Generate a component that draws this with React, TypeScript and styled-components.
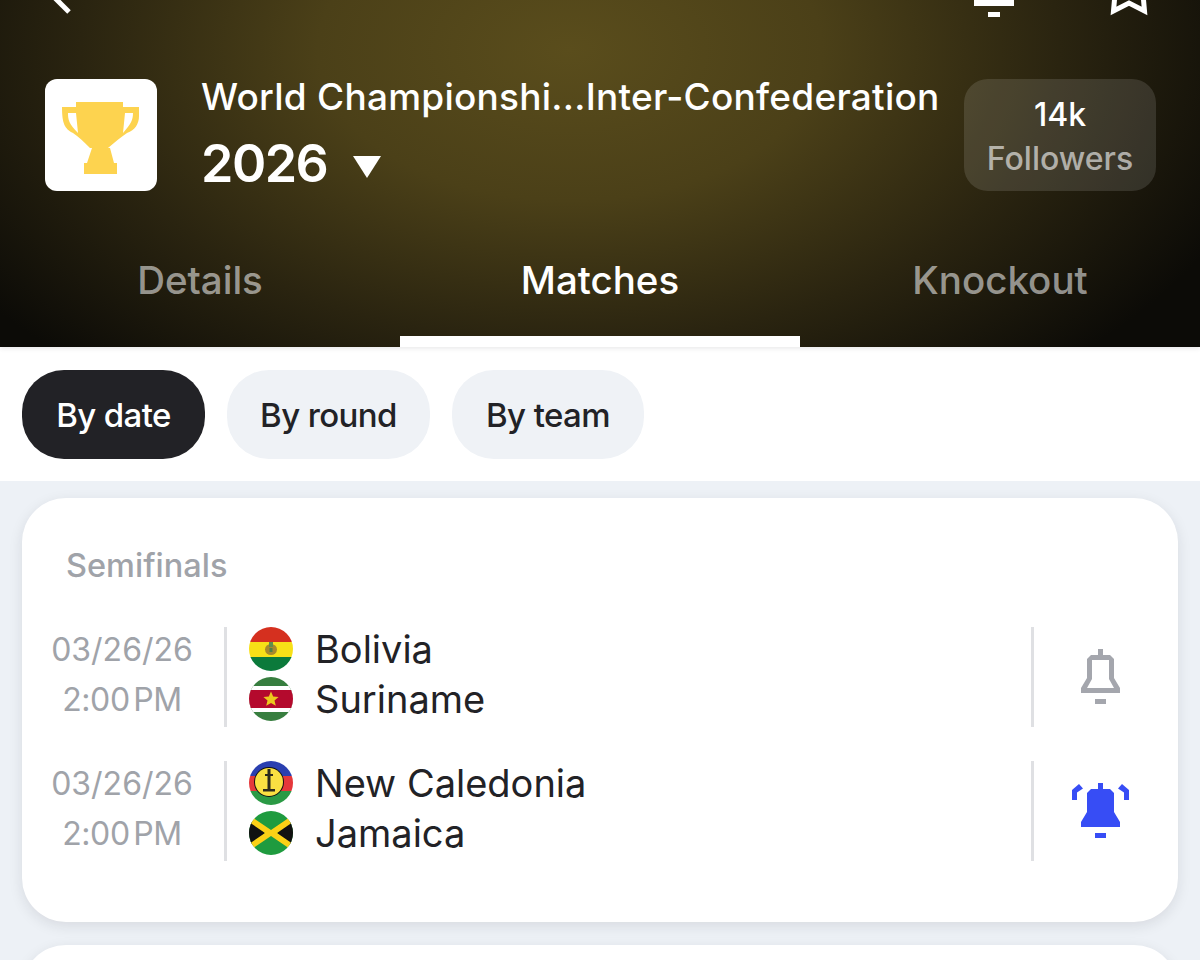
import styled, { createGlobalStyle } from 'styled-components';

const GlobalStyle = createGlobalStyle`
  html, body {
    margin: 0;
    padding: 0;
    background: #edf1f6;
  }
  body {
    font-family: Inter, "Liberation Sans", sans-serif;
    overflow: hidden;
  }
`;

const matches = [
  { id: 1, date: '03/26/26', time: '2:00 PM', home: 'Bolivia', away: 'Suriname', homeFlag: 'bo', awayFlag: 'sr', on: false },
  { id: 2, date: '03/26/26', time: '2:00 PM', home: 'New Caledonia', away: 'Jamaica', homeFlag: 'nc', awayFlag: 'jm', on: true },
];

const Flag = ({ code }: { code: string }) => {
  if (code === 'bo') {
    return (
      <FlagSvg viewBox="0 0 44 44">
        <rect width="44" height="15" fill="#d5301f" />
        <rect y="15" width="44" height="15" fill="#f7e017" />
        <rect y="30" width="44" height="14" fill="#0b7a3b" />
        <ellipse cx="22" cy="22.5" rx="6" ry="5.500" fill="#a8892c" />
        <rect x="20" y="15" width="4" height="5" fill="#5f8d4e" />
        <rect x="20.500" y="21" width="3" height="4" fill="#4f7f46" />
      </FlagSvg>
    );
  }
  if (code === 'sr') {
    return (
      <FlagSvg viewBox="0 0 44 44">
        <rect width="44" height="44" fill="#377e3f" />
        <rect y="9" width="44" height="26" fill="#fff" />
        <rect y="13" width="44" height="18" fill="#b40a2d" />
        <polygon points="22,14.500 24.200,19.600 29.600,20 25.500,23.500 26.800,28.800 22,26 17.200,28.800 18.500,23.500 14.400,20 19.800,19.600" fill="#ecc81d" />
      </FlagSvg>
    );
  }
  if (code === 'nc') {
    return (
      <FlagSvg viewBox="0 0 44 44">
        <rect width="44" height="15" fill="#2a3fb0" />
        <rect y="15" width="44" height="15" fill="#e5383b" />
        <rect y="30" width="44" height="14" fill="#2b9a45" />
        <circle cx="20" cy="21" r="15" fill="#111" />
        <circle cx="20" cy="21" r="14" fill="#fae042" />
        <rect x="18.500" y="8" width="3" height="20" fill="#2c2a1c" />
        <rect x="16" y="13" width="8" height="2" fill="#2c2a1c" />
        <rect x="14" y="28" width="12" height="2.500" fill="#2c2a1c" />
      </FlagSvg>
    );
  }
  return (
    <FlagSvg viewBox="0 0 44 44">
      <rect width="44" height="44" fill="#1f9b3f" />
      <polygon points="0,8 16,22 0,36" fill="#111" />
      <polygon points="44,8 28,22 44,36" fill="#111" />
      <path d="M0 4 L22 19 L44 4 V11 L28 22 L44 33 V40 L22 25 L0 40 V33 L16 22 L0 11 Z" fill="#fcd116" />
    </FlagSvg>
  );
};

const BellOff = () => (
  <BellSvg viewBox="0 0 60 60">
    <path
      d="M28 4h5v6h7l4 4v19l6 10v5H11v-5l6-10V14l4-4h7Z M22 15v19l-5 9h27l-5-9V15Z"
      fill="#a4a6ad"
      fillRule="evenodd"
    />
    <rect x="25" y="54" width="11" height="5" fill="#a4a6ad" />
  </BellSvg>
);

const BellOn = () => (
  <BellSvg viewBox="0 0 60 60">
    <path d="M28 4h5v6h7l4 4v19l6 10v5H11v-5l6-10V14l4-4h7Z" fill="#374df5" />
    <rect x="25" y="54" width="11" height="5" fill="#374df5" />
    <path d="M2 21V11l7-6 4 4.500-6 4v7.500Z" fill="#374df5" />
    <path d="M59 21V11l-7-6-4 4.500 6 4v7.500Z" fill="#374df5" />
  </BellSvg>
);

const App = () => {
  return (
    <Page>
      <GlobalStyle />
      <Header>
        <TopBar>
          <svg width="40" height="18" viewBox="0 0 40 18">
            <path d="M2 -7 L21 12" fill="none" stroke="#fff" strokeWidth="5" />
          </svg>
          <TopActions>
            <svg width="40" height="18" viewBox="0 0 40 18">
              <path d="M0 0H40V6H0Z" fill="#fff" />
              <rect x="14" y="12" width="12" height="5" fill="#fff" />
            </svg>
            <svg width="38" height="18" viewBox="0 0 38 18">
              <path d="M5 -6 L3.500 11 L19 3 L34.500 11 L33 -6" fill="none" stroke="#fff" strokeWidth="5" />
            </svg>
          </TopActions>
        </TopBar>
        <Identity>
          <LogoBox>
            <svg width="80" height="74" viewBox="0 0 80 74">
              <path
                fillRule="evenodd"
                fill="#fdd34f"
                d="M15 0H62V5H78V14C78 22 74 28 66 31C60 35 54 40 47 46H49L53 61H56V72H23V61H26L31 46H29C23 40 18 35 12 31C4 27 1 22 1 5H15Z M7 11C7 18 8 22 17 31L15 11Z M72 11C72 18 70 22 62 31L64 11Z"
              />
            </svg>
          </LogoBox>
          <TitleBlock>
            <LeagueName>World Championshi...Inter-Confederation</LeagueName>
            <SeasonRow>
              <Season>2026</Season>
              <Caret viewBox="0 0 28 22">
                <polygon points="0,0 28,0 14,22" fill="#fff" />
              </Caret>
            </SeasonRow>
          </TitleBlock>
          <FollowersBox>
            <FollowerCount>14k</FollowerCount>
            <FollowerLabel>Followers</FollowerLabel>
          </FollowersBox>
        </Identity>
        <Tabs>
          <Tab>Details</Tab>
          <Tab $active>Matches</Tab>
          <Tab>Knockout</Tab>
        </Tabs>
      </Header>
      <ChipRow>
        <Chip $active $width={183}>By date</Chip>
        <Chip $width={203}>By round</Chip>
        <Chip $width={192}>By team</Chip>
      </ChipRow>
      <Content>
        <Card>
          <RoundTitle>Semifinals</RoundTitle>
          <MatchList>
            {matches.map((m) => (
              <MatchRow key={m.id}>
                <DateCol>
                  <span>{m.date}</span>
                  <TimeText>{m.time}</TimeText>
                </DateCol>
                <Teams>
                  <Team>
                    <Flag code={m.homeFlag} />
                    {m.home}
                  </Team>
                  <Team>
                    <Flag code={m.awayFlag} />
                    {m.away}
                  </Team>
                </Teams>
                <BellCol>{m.on ? <BellOn /> : <BellOff />}</BellCol>
              </MatchRow>
            ))}
          </MatchList>
        </Card>
        <Card />
      </Content>
    </Page>
  );
};

const Page = styled.div`
  width: 1200px;
  height: 960px;
  overflow: hidden;
  background: #edf1f6;
`;

const Header = styled.header`
  position: relative;
  height: 347px;
  box-sizing: border-box;
  display: flex;
  flex-direction: column;
  background: radial-gradient(ellipse 720px 430px at 570px 50px, #5a4d1c 0%, #4b4018 35%, #2a2410 68%, #0c0b07 100%);
  background-color: #0c0b07;
  box-shadow: 0 1px 5px rgba(34, 34, 38, 0.12);
`;

const TopBar = styled.div`
  height: 18px;
  display: flex;
  justify-content: space-between;
  align-items: flex-start;
  padding: 0 52px 0 48px;
`;

const TopActions = styled.div`
  display: flex;
  gap: 96px;
`;

const Identity = styled.div`
  display: flex;
  align-items: center;
  margin: 61px 44px 0 45px;
  height: 112px;
`;

const LogoBox = styled.div`
  width: 112px;
  height: 112px;
  flex-shrink: 0;
  padding-top: 8px;
  box-sizing: border-box;
  display: flex;
  align-items: center;
  justify-content: center;
  background: #fff;
  border-radius: 12px;
`;

const TitleBlock = styled.div`
  flex: 1;
  margin: 0 0 2px 44px;
  display: flex;
  flex-direction: column;
  gap: 15px;
`;

const LeagueName = styled.div`
  color: #fff;
  font-size: 37px;
  font-weight: 500;
  line-height: 44px;
  letter-spacing: 0.25px;
  white-space: nowrap;
`;

const SeasonRow = styled.div`
  display: flex;
  align-items: center;
  gap: 26px;
`;

const Season = styled.div`
  color: #fff;
  font-size: 52px;
  font-weight: 600;
  line-height: 60px;
  letter-spacing: -1.5px;
`;

const Caret = styled.svg`
  width: 28px;
  height: 22px;
  margin-top: 6px;
`;

const FollowersBox = styled.div`
  width: 192px;
  height: 112px;
  flex-shrink: 0;
  box-sizing: border-box;
  padding-top: 4px;
  display: flex;
  flex-direction: column;
  align-items: center;
  justify-content: center;
  gap: 8px;
  background: rgba(255, 255, 255, 0.12);
  border-radius: 24px;
`;

const FollowerCount = styled.div`
  color: #fff;
  font-size: 32px;
  font-weight: 500;
  line-height: 36px;
`;

const FollowerLabel = styled.div`
  color: rgba(255, 255, 255, 0.6);
  font-size: 32px;
  font-weight: 500;
  line-height: 36px;
`;

const Tabs = styled.nav`
  margin-top: auto;
  display: grid;
  grid-template-columns: repeat(3, 1fr);
`;

const Tab = styled.div<{ $active?: boolean }>`
  height: 97px;
  box-sizing: border-box;
  padding-top: 8px;
  display: flex;
  align-items: flex-start;
  justify-content: center;
  font-size: 38.5px;
  line-height: 44px;
  font-weight: 500;
  color: ${(p) => (p.$active ? '#fff' : 'rgba(255, 255, 255, 0.55)')};
  border-bottom: 11px solid ${(p) => (p.$active ? '#fff' : 'transparent')};
`;

const ChipRow = styled.div`
  height: 134px;
  box-sizing: border-box;
  display: flex;
  gap: 22px;
  padding: 23px 22px;
  background: #fff;
`;

const Chip = styled.div<{ $active?: boolean; $width: number }>`
  width: ${(p) => p.$width}px;
  height: 89px;
  display: flex;
  align-items: center;
  justify-content: center;
  border-radius: 42px;
  font-size: 33px;
  font-weight: 500;
  letter-spacing: -0.6px;
  background: ${(p) => (p.$active ? '#222226' : '#eff2f6')};
  color: ${(p) => (p.$active ? '#fff' : '#222226')};
`;

const Content = styled.div`
  display: flex;
  flex-direction: column;
  gap: 23px;
  padding: 17px 22px 0;
`;

const Card = styled.section`
  height: 424px;
  flex-shrink: 0;
  box-sizing: border-box;
  padding: 46px 0 0;
  background: #fff;
  border-radius: 44px;
  box-shadow: 0 4px 14px rgba(34, 34, 38, 0.1);
`;

const RoundTitle = styled.div`
  margin-left: 44px;
  color: #a0a3a9;
  font-size: 32.500px;
  line-height: 44px;
  font-weight: 500;
`;

const MatchList = styled.div`
  margin-top: 39px;
  display: flex;
  flex-direction: column;
  gap: 34px;
`;

const MatchRow = styled.div`
  height: 100px;
  display: grid;
  grid-template-columns: 202px 1fr 144px;
  grid-template-rows: 100px;
`;

const DateCol = styled.div`
  padding: 0 2px 5px 0;
  box-sizing: border-box;
  display: flex;
  flex-direction: column;
  align-items: center;
  justify-content: center;
  gap: 6px;
  color: #a0a3a9;
  font-size: 32px;
  line-height: 44px;
`;

const TimeText = styled.span`
  word-spacing: -5px;
  letter-spacing: -0.4px;
`;

const Teams = styled.div`
  border-left: 3px solid #dfe0e3;
  border-right: 3px solid #dfe0e3;
  padding: 0 0 6px 22px;
  display: flex;
  flex-direction: column;
  justify-content: center;
  gap: 6px;
`;

const Team = styled.div`
  display: flex;
  align-items: center;
  gap: 22px;
  color: #222226;
  font-size: 38px;
  line-height: 44px;
`;

const FlagSvg = styled.svg`
  width: 44px;
  height: 44px;
  flex-shrink: 0;
  border-radius: 50%;
`;

const BellCol = styled.div`
  display: flex;
  align-items: center;
  justify-content: center;
  padding: 0 12px 4px 0;
`;

const BellSvg = styled.svg`
  width: 60px;
  height: 60px;
`;

export default App;
